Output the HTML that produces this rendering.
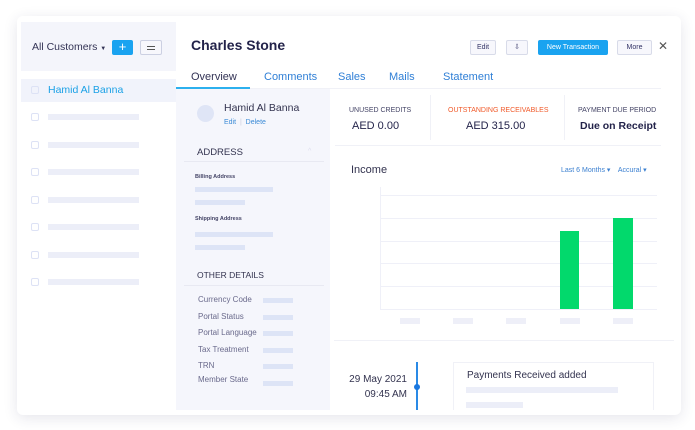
<!DOCTYPE html>
<html><head><meta charset="utf-8"><style>
*{margin:0;padding:0;box-sizing:border-box}
body{width:695px;height:430px;background:#fff;font-family:"Liberation Sans",sans-serif;position:relative;overflow:hidden}
.a{position:absolute}
.card{left:17px;top:16px;width:664px;height:399px;background:#fff;border-radius:6px;box-shadow:0 3px 14px rgba(40,40,90,.12)}
.sk{position:absolute;background:#eceef8;height:6px}
.skb{position:absolute;background:#dde4f6;height:5px}
.cb{position:absolute;width:8px;height:8px;border:1.3px solid #dde2f5;border-radius:2px;left:31px}
.t{position:absolute;white-space:nowrap}
.btn{position:absolute;top:40px;height:15px;border:1px solid #d8dbe9;background:#f7f7fc;border-radius:2px;font-size:7px;color:#333366;text-align:center;line-height:13px}
.grid{position:absolute;left:380px;width:277px;height:1px;background:#eff0f8}
.lab{color:#6a6a8c;font-size:8px;left:198px}
</style></head><body>
<div class="a card"></div>
<div class="a" style="left:21px;top:22px;width:155px;height:49px;background:#f4f5fb"></div>
<div class="t" style="left:32px;top:41px;font-size:10.5px;color:#333355">All Customers <span style="font-size:6px">▼</span></div>
<div class="a" style="left:112px;top:40px;width:21px;height:15px;background:#1aa3f0;border-radius:2px;color:#fff;font-size:13px;text-align:center;line-height:14px">+</div>
<div class="a" style="left:140px;top:40px;width:22px;height:15px;border:1px solid #ccd0e2;border-radius:2px;background:#f7f7fc"><div class="a" style="left:6px;top:5px;width:8px;height:1.3px;background:#555"></div><div class="a" style="left:6px;top:8px;width:8px;height:1.3px;background:#555"></div></div>
<div class="a" style="left:21px;top:79px;width:155px;height:23px;background:#f1f3fb"></div>
<div class="cb" style="top:86px"></div>
<div class="t" style="left:48px;top:84px;font-size:10.5px;color:#1ba1e6">Hamid Al Banna</div>
<div class="cb" style="top:113px"></div><div class="sk" style="left:48px;top:114px;width:91px"></div>
<div class="cb" style="top:141px"></div><div class="sk" style="left:48px;top:142px;width:91px"></div>
<div class="cb" style="top:168px"></div><div class="sk" style="left:48px;top:169px;width:91px"></div>
<div class="cb" style="top:196px"></div><div class="sk" style="left:48px;top:197px;width:91px"></div>
<div class="cb" style="top:223px"></div><div class="sk" style="left:48px;top:224px;width:91px"></div>
<div class="cb" style="top:251px"></div><div class="sk" style="left:48px;top:252px;width:91px"></div>
<div class="cb" style="top:278px"></div><div class="sk" style="left:48px;top:279px;width:91px"></div>
<div class="t" style="left:191px;top:37px;font-size:14px;font-weight:bold;color:#23234a">Charles Stone</div>
<div class="btn" style="left:470px;width:26px">Edit</div>
<div class="btn" style="left:506px;width:22px">⇩</div>
<div class="btn" style="left:538px;width:70px;background:#1aa3f0;border-color:#1aa3f0;color:#fff">New Transaction</div>
<div class="btn" style="left:617px;width:35px">More</div>
<div class="t" style="left:658px;top:39px;font-size:12px;color:#555">✕</div>
<div class="t" style="left:191px;top:71px;font-size:11px;color:#333355">Overview</div>
<div class="t" style="left:264px;top:71px;font-size:11px;color:#2f7fd6">Comments</div>
<div class="t" style="left:338px;top:71px;font-size:11px;color:#2f7fd6">Sales</div>
<div class="t" style="left:389px;top:71px;font-size:11px;color:#2f7fd6">Mails</div>
<div class="t" style="left:443px;top:71px;font-size:11px;color:#2f7fd6">Statement</div>
<div class="a" style="left:176px;top:87px;width:74px;height:2px;background:#2cb0ee"></div>
<div class="a" style="left:250px;top:88px;width:411px;height:1px;background:#f0f1f7"></div>
<div class="a" style="left:176px;top:89px;width:154px;height:321px;background:#f5f6fc"></div>
<div class="a" style="left:197px;top:105px;width:17px;height:17px;border-radius:50%;background:#dfe5f6"></div>
<div class="t" style="left:224px;top:102px;font-size:10.5px;color:#33334f">Hamid Al Banna</div>
<div class="t" style="left:224px;top:119px;font-size:7px;color:#3a8ad6">Edit &nbsp;<span style="color:#ccd">|</span>&nbsp; Delete</div>
<div class="t" style="left:197px;top:147px;font-size:9.5px;color:#33334f">ADDRESS</div>
<div class="t" style="left:308px;top:148px;font-size:7px;color:#dde">^</div>
<div class="a" style="left:184px;top:161px;width:140px;height:1px;background:#e8e9f2"></div>
<div class="t" style="left:195px;top:174px;font-size:5.5px;color:#444466;font-weight:bold">Billing Address</div>
<div class="skb" style="left:195px;top:187px;width:78px"></div>
<div class="skb" style="left:195px;top:200px;width:50px"></div>
<div class="t" style="left:195px;top:216px;font-size:5.5px;color:#444466;font-weight:bold">Shipping Address</div>
<div class="skb" style="left:195px;top:232px;width:78px"></div>
<div class="skb" style="left:195px;top:245px;width:50px"></div>
<div class="t" style="left:197px;top:270px;font-size:8.5px;color:#33334f">OTHER DETAILS</div>
<div class="a" style="left:184px;top:285px;width:140px;height:1px;background:#e8e9f2"></div>
<div class="t lab" style="top:295px">Currency Code</div><div class="skb" style="left:263px;top:298px;width:30px"></div>
<div class="t lab" style="top:312px">Portal Status</div><div class="skb" style="left:263px;top:315px;width:30px"></div>
<div class="t lab" style="top:328px">Portal Language</div><div class="skb" style="left:263px;top:331px;width:30px"></div>
<div class="t lab" style="top:345px">Tax Treatment</div><div class="skb" style="left:263px;top:348px;width:30px"></div>
<div class="t lab" style="top:361px">TRN</div><div class="skb" style="left:263px;top:364px;width:30px"></div>
<div class="t lab" style="top:375px">Member State</div><div class="skb" style="left:263px;top:381px;width:30px"></div>
<div class="t" style="left:349px;top:107px;font-size:7px;color:#444466">UNUSED CREDITS</div>
<div class="t" style="left:352px;top:120px;font-size:11px;color:#23234a">AED 0.00</div>
<div class="a" style="left:430px;top:95px;width:1px;height:45px;background:#f0f1f7"></div>
<div class="t" style="left:448px;top:107px;font-size:7px;color:#f05a2a">OUTSTANDING RECEIVABLES</div>
<div class="t" style="left:466px;top:120px;font-size:11px;color:#23234a">AED 315.00</div>
<div class="a" style="left:564px;top:95px;width:1px;height:45px;background:#f0f1f7"></div>
<div class="t" style="left:578px;top:107px;font-size:7px;color:#444466">PAYMENT DUE PERIOD</div>
<div class="t" style="left:580px;top:120px;font-size:10.5px;color:#23234a;font-weight:bold">Due on Receipt</div>
<div class="a" style="left:335px;top:145px;width:326px;height:1px;background:#f0f1f7"></div>
<div class="t" style="left:351px;top:164px;font-size:11px;color:#33334f">Income</div>
<div class="t" style="left:561px;top:166px;font-size:7px;color:#3a7fd0">Last 6 Months ▾ &nbsp;&nbsp; Accural ▾</div>
<div class="a" style="left:380px;top:187px;width:1px;height:122px;background:#eff0f8"></div>
<div class="grid" style="top:195px"></div><div class="grid" style="top:218px"></div><div class="grid" style="top:241px"></div>
<div class="grid" style="top:263px"></div><div class="grid" style="top:286px"></div><div class="grid" style="top:309px"></div>
<div class="a" style="left:560px;top:231px;width:19px;height:78px;background:#02d96c"></div>
<div class="a" style="left:613px;top:218px;width:20px;height:91px;background:#02d96c"></div>
<div class="sk" style="left:400px;top:318px;width:20px;background:#eeeff8"></div>
<div class="sk" style="left:453px;top:318px;width:20px;background:#eeeff8"></div>
<div class="sk" style="left:506px;top:318px;width:20px;background:#eeeff8"></div>
<div class="sk" style="left:560px;top:318px;width:20px;background:#eeeff8"></div>
<div class="sk" style="left:613px;top:318px;width:20px;background:#eeeff8"></div>
<div class="a" style="left:334px;top:340px;width:340px;height:1px;background:#f0f1f7"></div>
<div class="t" style="left:346px;top:374px;font-size:10px;color:#33334f;text-align:right;width:61px">29 May 2021</div>
<div class="t" style="left:346px;top:389px;font-size:10px;color:#33334f;text-align:right;width:61px">09:45 AM</div>
<div class="a" style="left:416px;top:362px;width:1.5px;height:48px;background:#2a8ae6"></div>
<div class="a" style="left:414px;top:384px;width:6px;height:6px;border-radius:50%;background:#1a78e0"></div>
<div class="a" style="left:453px;top:362px;width:201px;height:48px;border:1px solid #f0f1f7;border-bottom:none"></div>
<div class="t" style="left:467px;top:370px;font-size:10px;color:#33334f">Payments Received added</div>
<div class="sk" style="left:466px;top:387px;width:152px"></div>
<div class="sk" style="left:466px;top:402px;width:57px"></div>
</body></html>
